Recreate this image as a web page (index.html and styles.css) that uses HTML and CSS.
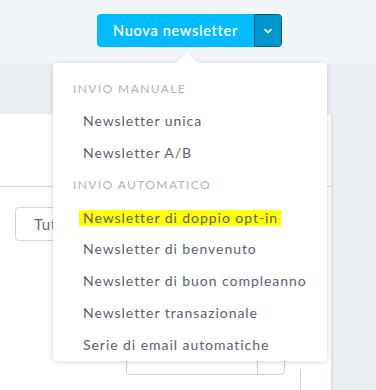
FILE: index.html
```html
<!DOCTYPE html>
<html lang="it">
<head>
<meta charset="utf-8">
<link rel="stylesheet" href="styles.css">
</head>
<body>
<header class="top">
  <div class="split-btn">
    <button class="btn-main">Nuova newsletter</button>
    <button class="btn-toggle"><svg width="10" height="6" viewBox="0 0 10 6"><path d="M1.5 1.2 5 4.6 8.5 1.2" fill="none" stroke="#fff" stroke-width="1.8"/></svg></button>
  </div>
</header>
<div class="band"></div>
<main class="main">
  <section class="panel">
    <div class="panel-head"></div>
    <div class="toolbar"><button class="filter">Tutte</button></div>
    <div class="spacer"></div>
    <div class="bottom-row">
      <div class="select"><span class="select-end"></span></div>
    </div>
    <div class="col-line"></div>
  </section>
  <aside class="side"></aside>
</main>
<div class="dropdown">
  <div class="caret"></div>
  <div class="group">Invio manuale</div>
  <a class="item">Newsletter unica</a>
  <a class="item">Newsletter A/B</a>
  <div class="group">Invio automatico</div>
  <a class="item"><span class="hl">Newsletter di doppio opt-in</span></a>
  <a class="item">Newsletter di benvenuto</a>
  <a class="item">Newsletter di buon compleanno</a>
  <a class="item">Newsletter transazionale</a>
  <a class="item">Serie di email automatiche</a>
</div>
</body>
</html>
```
FILE: styles.css
```css
* { box-sizing: border-box; }
html, body { margin: 0; height: 100%; overflow: hidden; }
body {
  background: #ebeef2;
  font-family: "Lato", "Open Sans", sans-serif;
  position: relative;
}
.top {
  height: 65px;
  background: #f3f6f9;
  display: flex;
  align-items: flex-start;
  padding: 14px 0 0 97px;
  border-bottom: 1px solid #e6eaef;
}
.split-btn { display: flex; height: 33px; }
.btn-main {
  width: 157px;
  border: none;
  background: #00bbff;
  color: #fff;
  font-family: inherit;
  font-size: 14.5px;
  font-weight: 600;
  letter-spacing: 0.7px;
  border-radius: 4px 0 0 4px;
  padding: 0;
}
.btn-toggle {
  width: 28px;
  border: 1px solid #0b5f80;
  background: #0097cf;
  border-radius: 0 4px 4px 0;
  padding: 0;
  display: flex;
  align-items: center;
  justify-content: center;
}
.band { height: 49px; }
.main { display: flex; height: 276px; }
.panel {
  width: 331px;
  background: #fff;
  box-shadow: 2px 0 2px rgba(0,0,0,0.06);
  display: flex;
  flex-direction: column;
  position: relative;
}
.panel-head { height: 73px; border-bottom: 1px solid #ccd3dd; flex: none; }
.toolbar { padding: 20px 0 0 15px; flex: none; }
.filter {
  height: 34px;
  width: 80px;
  border: 1px solid #cfd5de;
  border-radius: 4px;
  background: #fff;
  font-family: inherit;
  font-size: 15px;
  color: #5f6a7a;
  text-align: left;
  padding-left: 18px;
  letter-spacing: 0.5px;
}
.spacer { flex: 0 0 90px; }
.bottom-row { padding-left: 126px; flex: none; }
.select {
  width: 159px;
  height: 44px;
  border: 1px solid #c8cfd9;
  border-radius: 4px;
  position: relative;
}
.select-end {
  position: absolute;
  right: 26px;
  top: 0;
  bottom: 0;
  border-left: 1px solid #c8cfd9;
}
.col-line {
  position: absolute;
  left: 300px;
  top: 255px;
  bottom: 0;
  border-left: 1px solid #c8cfd9;
}
.dropdown {
  position: absolute;
  left: 53px;
  top: 63px;
  width: 274px;
  height: 298px;
  background: #fff;
  border-radius: 4px;
  box-shadow: 0 1px 6px rgba(40,50,70,0.18);
  padding-top: 10px;
}
.caret {
  position: absolute;
  top: -8px;
  left: 126px;
  width: 16px;
  height: 16px;
  background: #fff;
  transform: rotate(45deg);
  box-shadow: -1px -1px 2px rgba(40,50,70,0.06);
}
.group {
  height: 32px;
  line-height: 32px;
  padding-left: 20px;
  font-size: 12px;
  text-transform: uppercase;
  letter-spacing: 1.4px;
  color: #a9b5c4;
}
.item {
  display: block;
  height: 32px;
  line-height: 32px;
  padding: 0 0 0 30px;
  font-size: 14px;
  letter-spacing: 0.95px;
  color: #5a6172;
}
.hl {
  background: #ffff00;
  display: inline-block;
  line-height: 16px;
  padding: 0 3px 0 4px;
  margin-left: -4px;
  vertical-align: middle;
}
```
